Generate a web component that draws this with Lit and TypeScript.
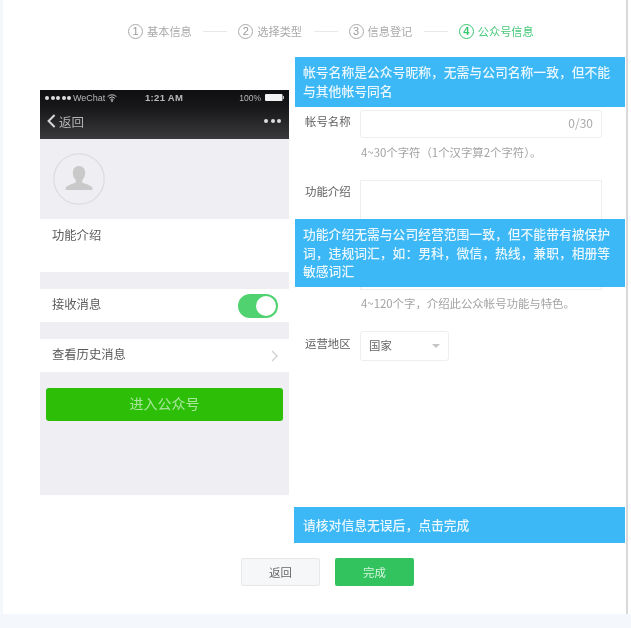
import { LitElement, html, css } from "lit";
import { customElement } from "lit/decorators.js";

@customElement("app-root")
export class AppRoot extends LitElement {
  static styles = css`
    :host { display: block; width: 631px; height: 628px; background: #f4f8fc; font-family: "Noto Sans CJK SC", "Liberation Sans", sans-serif; overflow: hidden; }
    * { box-sizing: border-box; }
    .panel { position: relative; margin-left: 3px; width: 628px; height: 614px; background: #fff; padding-right: 3px; filter: blur(.3px); }
    .inner { height: 100%; border-right: 2px solid #d9d9d9; display: flex; flex-direction: column; }
    .steps { height: 62px; flex: none; display: flex; align-items: center; padding-left: 125px; font-size: 11.2px; color: #a9a9a9; }
    .step { display: flex; align-items: center; gap: 4px; }
    .num { width: 15px; height: 15px; border: 1px solid #aaa; border-radius: 50%; display: flex; align-items: center; justify-content: center; font: 11px "Liberation Sans", sans-serif; color: #999; }
    .step.on { color: #45c878; }
    .step.on .num { border-color: #38c66f; color: #38c66f; font-weight: bold; }
    .sep { width: 24px; height: 1px; background: #e8e8e8; margin: 0 11px 0 11.5px; }
    .body { flex: 1; display: flex; padding: 28px 0 0 37px; }
    .phone { width: 249px; height: 405px; flex: none; background: #eeeef3; display: flex; flex-direction: column; }
    .head { height: 49px; flex: none; background: linear-gradient(#0f0f11 0%, #17171a 35%, #3a3a3d 100%); color: #bdbdbd; padding: 0 5px; }
    .status { height: 15px; display: flex; align-items: center; font: 9px "Liberation Sans", sans-serif; color: #b8b8b8; }
    .status .time { font-size: 9.5px; font-weight: bold; letter-spacing: .3px; flex: 1; }
    .st-l, .st-r { display: flex; align-items: center; gap: 2px; }
    .st-l { width: 100px; }
    .st-r { font-size: 8.5px; gap: 4px; }
    .dots { display: flex; gap: 1.5px; }
    .dots i { width: 4px; height: 4px; background: #ddd; border-radius: 50%; }
    .nav { height: 34px; display: flex; align-items: center; justify-content: space-between; font-size: 12.5px; color: #b5b5b5; padding: 0 3px 2px 2px; }
    .back { display: flex; align-items: center; gap: 3px; }
    .more { display: flex; gap: 2.5px; }
    .more i { width: 4px; height: 4px; background: #ddd; border-radius: 50%; }
    .avatar-zone { height: 80px; flex: none; padding: 14px 0 0 13px; }
    .avatar { width: 52px; height: 52px; display: block; }
    .cell { flex: none; background: #fff; display: flex; align-items: center; justify-content: space-between; font-size: 12.3px; color: #5a5a5a; padding: 0 11px 0 12px; height: 33px; margin-bottom: 17px; }
    .cell.intro { height: 53px; align-items: flex-start; padding-top: 7px; }
    .cell.last { margin-bottom: 16px; }
    .cell span { margin-top: -3px; }
    .toggle { width: 40px; height: 24px; border-radius: 12px; background: #4fd26f; padding: 2px 2px 2px 18px; }
    .toggle i { display: block; width: 20px; height: 20px; border-radius: 50%; background: #fff; }
    .enter { flex: none; margin-left: 6px; width: 237px; height: 33px; border-radius: 3px; background: #2dbf08; color: #a9e79e; font-size: 14px; display: flex; align-items: center; justify-content: center; padding-bottom: 4px; }
    .form { padding: 20px 0 0 16px; width: 313px; flex: none; }
    .row { display: flex; font-size: 11.4px; color: #606060; }
    .label { width: 55px; flex: none; padding-top: 3px; line-height: 16px; }
    .row.region .label { padding-top: 4px; }
    .input { width: 242px; height: 28px; flex: none; border: 1px solid #eee; border-radius: 3px; display: flex; align-items: center; justify-content: flex-end; padding: 0 8px 3px 0; font-size: 12px; color: #aaa; }
    .area { width: 242px; height: 110px; flex: none; border: 1px solid #eee; }
    .hint { margin-left: 56px; font-size: 11.4px; color: #a3a3a3; line-height: 16px; }
    .hint.a { margin-top: 6px; margin-bottom: 20px; }
    .hint.b { margin-top: 5px; margin-bottom: 20px; }
    .select { width: 89px; height: 30px; flex: none; border: 1px solid #eee; border-radius: 3px; display: flex; align-items: center; justify-content: space-between; padding: 0 8px; color: #666; font-size: 11.4px; }
    .caret { width: 0; height: 0; border: 4px solid transparent; border-top-color: #c4c4c4; border-bottom: 0; }
    .select .label-t { margin-top: -2px; }
    .foot { flex: none; height: 56px; display: flex; gap: 15px; padding-left: 238px; }
    .btn { width: 79px; height: 28px; border-radius: 2px; font-size: 11.4px; display: flex; align-items: center; justify-content: center; }
    .btn.ghost { background: #f6f7f9; border: 1px solid #e8e8e8; color: #666; }
    .btn.ok { background: #32c35f; color: #d8f5df; }
    .bar { position: absolute; background: #3bb8f5; color: #eaf7fe; font-size: 12.8px; font-weight: 500; line-height: 18.8px; padding: 0 8px; display: flex; align-items: center; }
    .bar.one { left: 292px; top: 57px; width: 330px; height: 50px; }
    .bar.two { left: 292px; top: 219px; width: 330px; height: 68px; }
    .bar.three { left: 291px; top: 507px; width: 331px; height: 36px; padding-left: 9px; }
  `;

  render() {
    const steps = ["基本信息", "选择类型", "信息登记", "公众号信息"];
    return html`
      <div class="panel">
        <div class="inner">
          <div class="steps">
            ${steps.map((s, i) => html`
              <div class="step ${i === 3 ? "on" : ""}"><span class="num">${i + 1}</span>${s}</div>
              ${i < 3 ? html`<div class="sep"></div>` : ""}
            `)}
          </div>
          <div class="body">
            <div class="phone">
              <div class="head">
                <div class="status">
                  <div class="st-l">
                    <span class="dots"><i></i><i></i><i></i><i></i><i></i></span>
                    <span>WeChat</span>
                    <svg width="10" height="8" viewBox="0 0 10 8" fill="none" stroke="#c8c8c8" stroke-width="1">
                      <path d="M.6 2.6a6.3 6.3 0 0 1 8.8 0M2.1 4.2a4.2 4.2 0 0 1 5.8 0M3.5 5.7a2.1 2.1 0 0 1 3 0"/><circle cx="5" cy="7" r=".5" fill="#c8c8c8"/>
                    </svg>
                  </div>
                  <span class="time">1:21 AM</span>
                  <div class="st-r">
                    <span>100%</span>
                    <svg width="19" height="7" viewBox="0 0 19 7"><rect width="17.5" height="7" rx="1" fill="#f2f2f2"/><rect x="17.8" y="2" width="1.2" height="3" fill="#bbb"/></svg>
                  </div>
                </div>
                <div class="nav">
                  <div class="back">
                    <svg width="9" height="14" viewBox="0 0 9 14" fill="none" stroke="#d6d6d6" stroke-width="2"><path d="M7.6 1 1.6 7l6 6"/></svg>
                    <span>返回</span>
                  </div>
                  <div class="more"><i></i><i></i><i></i></div>
                </div>
              </div>
              <div class="avatar-zone">
                <svg class="avatar" viewBox="0 0 52 52">
                  <circle cx="26" cy="26" r="25.2" fill="#efeff3" stroke="#dcdcdc" stroke-width="1.2"/>
                  <path d="M26 13c-4 0-6.2 3-6.2 7 0 3 1.2 5.6 3 7v2.5c-2.8 1.2-7 2.3-9.5 4.3-.6.6-.8 2.200-.8 3.200h27c0-1-.2-2.600-.8-3.200-2.500-2-6.700-3.100-9.500-4.300V27c1.800-1.400 3-4 3-7 0-4-2.200-7-6.200-7z" fill="#c9c9c9"/>
                </svg>
              </div>
              <div class="cell intro">功能介绍</div>
              <div class="cell"><span>接收消息</span><div class="toggle"><i></i></div></div>
              <div class="cell last"><span>查看历史消息</span>
                <svg width="7" height="12" viewBox="0 0 7 12" fill="none" stroke="#cfcfcf" stroke-width="1.3"><path d="m1 1 5 5-5 5"/></svg>
              </div>
              <div class="enter">进入公众号</div>
            </div>
            <div class="form">
              <div class="row"><div class="label">帐号名称</div><div class="input">0/30</div></div>
              <div class="hint a">4~30个字符（1个汉字算2个字符）。</div>
              <div class="row"><div class="label">功能介绍</div><div class="area"></div></div>
              <div class="hint b">4~120个字，介绍此公众帐号功能与特色。</div>
              <div class="row region">
                <div class="label">运营地区</div>
                <div class="select"><span class="label-t">国家</span><span class="caret"></span></div>
              </div>
            </div>
          </div>
          <div class="foot">
            <div class="btn ghost">返回</div>
            <div class="btn ok">完成</div>
          </div>
        </div>
        <div class="bar one"><span>帐号名称是公众号昵称，无需与公司名称一致，但不能与其他帐号同名</span></div>
        <div class="bar two"><span>功能介绍无需与公司经营范围一致，但不能带有被保护词，违规词汇，如：男科，微信，热线，兼职，相册等敏感词汇</span></div>
        <div class="bar three"><span>请核对信息无误后，点击完成</span></div>
      </div>
    `;
  }
}
